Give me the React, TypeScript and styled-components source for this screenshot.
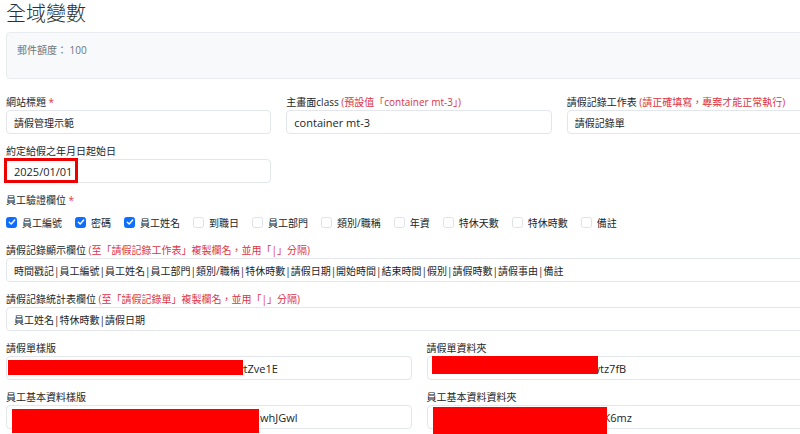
import React from "react";
import styled, { createGlobalStyle } from "styled-components";

const GlobalStyle = createGlobalStyle`
  html, body {
    margin: 0;
    padding: 0;
    background: #ffffff;
    overflow: hidden;
  }
  body {
    font-family: "Open Sans", "Noto Sans CJK TC", sans-serif;
    font-size: 10px;
    color: #212529;
  }
`;

const Page = styled.div`
  width: 826px;
  padding-left: 6px;
`;

const Title = styled.h1`
  margin: 0 0 4px;
  font-size: 20px;
  line-height: 28px;
  font-weight: 300;
  color: #2b2f33;
`;

const InfoBox = styled.div`
  box-sizing: border-box;
  height: 47px;
  padding: 10px 10px;
  margin-bottom: 16px;
  background: #f8f9fa;
  border: 1px solid #e9ecef;
  border-radius: 4px;
  color: #6c757d;
  line-height: 15px;
`;

const Grid = styled.div<{ $cols: number }>`
  display: grid;
  grid-template-columns: repeat(${(p) => p.$cols}, 1fr);
  column-gap: 15px;
`;

const Field = styled.div`
  margin-bottom: 10px;
`;

const Label = styled.div`
  line-height: 14px;
  margin-bottom: 1px;
  white-space: nowrap;
`;

const Note = styled.span`
  color: #dc3545;
`;

const Box = styled.div<{ $latin?: boolean; $indent?: number }>`
  position: relative;
  box-sizing: border-box;
  height: 24px;
  display: flex;
  align-items: center;
  padding: 0 7px;
  padding-left: ${(p) => (p.$indent !== undefined ? `${p.$indent}px` : "7px")};
  border: 1px solid #e3e6ea;
  border-radius: 4px;
  background: #ffffff;
  white-space: nowrap;
  font-size: ${(p) => (p.$latin ? "11px" : "10px")};
  color: #212529;
`;

const Highlight = styled.div`
  position: absolute;
  left: -3px;
  top: -2px;
  width: 74px;
  height: 25px;
  box-sizing: border-box;
  border: 3px solid #ee0000;
`;

const Redaction = styled.div<{ $l: number; $t: number; $w: number; $h: number }>`
  position: absolute;
  left: ${(p) => p.$l}px;
  top: ${(p) => p.$t}px;
  width: ${(p) => p.$w}px;
  height: ${(p) => p.$h}px;
  background: #ff0000;
  z-index: 1;
`;

const CheckRow = styled.div`
  display: flex;
  align-items: center;
  height: 22px;
  margin-top: 4px;
  margin-bottom: 10px;
  gap: 13px;
`;

const CheckItem = styled.label`
  display: flex;
  align-items: center;
  gap: 5px;
  white-space: nowrap;
`;

const CheckBox = styled.span<{ $on: boolean }>`
  box-sizing: border-box;
  width: 11px;
  height: 11px;
  border-radius: 2.5px;
  display: flex;
  align-items: center;
  justify-content: center;
  background: ${(p) => (p.$on ? "#0d6efd" : "#ffffff")};
  border: 1px solid ${(p) => (p.$on ? "#0d6efd" : "#dfe2e6")};
`;

const checks: [string, boolean][] = [
  ["員工編號", true],
  ["密碼", true],
  ["員工姓名", true],
  ["到職日", false],
  ["員工部門", false],
  ["類別/職稱", false],
  ["年資", false],
  ["特休天數", false],
  ["特休時數", false],
  ["備註", false],
];

const Check = ({ label, on }: { label: string; on: boolean }) => (
  <CheckItem>
    <CheckBox $on={on}>
      {on && (
        <svg width="8" height="8" viewBox="0 0 8 8">
          <polyline
            points="1.3,4.2 3.2,6 6.7,2"
            fill="none"
            stroke="#fff"
            strokeWidth="1.4"
            strokeLinecap="round"
            strokeLinejoin="round"
          />
        </svg>
      )}
    </CheckBox>
    {label}
  </CheckItem>
);

export default function App() {
  return (
    <>
      <GlobalStyle />
      <Page>
        <Title>全域變數</Title>
        <InfoBox>郵件額度： 100</InfoBox>

        <Grid $cols={3}>
          <Field>
            <Label>
              網站標題 <Note>*</Note>
            </Label>
            <Box>請假管理示範</Box>
          </Field>
          <Field>
            <Label>
              主畫面class <Note>(預設值「container mt-3」)</Note>
            </Label>
            <Box $latin>container mt-3</Box>
          </Field>
          <Field>
            <Label>
              請假記錄工作表 <Note>(請正確填寫，專案才能正常執行)</Note>
            </Label>
            <Box>請假記錄單</Box>
          </Field>
          <Field>
            <Label>約定給假之年月日起始日</Label>
            <Box $latin>
              2025/01/01
              <Highlight />
            </Box>
          </Field>
        </Grid>

        <Label>
          員工驗證欄位 <Note>*</Note>
        </Label>
        <CheckRow>
          {checks.map(([l, on]) => (
            <Check key={l} label={l} on={on} />
          ))}
        </CheckRow>

        <Field>
          <Label>
            請假記錄顯示欄位 <Note>(至「請假記錄工作表」複製欄名，並用「|」分隔)</Note>
          </Label>
          <Box>
            時間戳記|員工編號|員工姓名|員工部門|類別/職稱|特休時數|請假日期|開始時間|結束時間|假別|請假時數|請假事由|備註
          </Box>
        </Field>

        <Field>
          <Label>
            請假記錄統計表欄位 <Note>(至「請假記錄單」複製欄名，並用「|」分隔)</Note>
          </Label>
          <Box>員工姓名|特休時數|請假日期</Box>
        </Field>

        <Grid $cols={2}>
          <Field>
            <Label>請假單樣版</Label>
            <Box $latin $indent={231}>
              <Redaction $l={1} $t={3} $w={235} $h={15} />
              vtZve1E
            </Box>
          </Field>
          <Field>
            <Label>請假單資料夾</Label>
            <Box $latin $indent={164}>
              <Redaction $l={4} $t={-1} $w={166} $h={18} />
              wtz7fB
            </Box>
          </Field>
          <Field>
            <Label>員工基本資料樣版</Label>
            <Box $latin $indent={253}>
              <Redaction $l={5} $t={3} $w={247} $h={24} />
              whJGwl
            </Box>
          </Field>
          <Field>
            <Label>員工基本資料資料夾</Label>
            <Box $latin $indent={176}>
              <Redaction $l={5} $t={1} $w={174} $h={28} />
              K6mz
            </Box>
          </Field>
        </Grid>
      </Page>
    </>
  );
}
